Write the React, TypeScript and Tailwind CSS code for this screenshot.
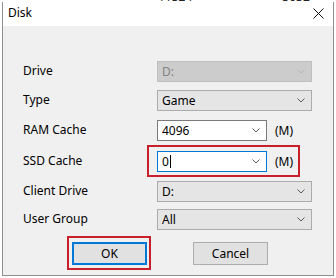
import React from "react";

type BoxKind = "disabled" | "list" | "edit" | "focus";

const BOX_STYLE: Record<BoxKind, string> = {
  disabled: "bg-[#cccccc] border-[#bfbfbf] text-[#838383]",
  list: "bg-[#e5e5e5] border-[#acacac] text-black",
  edit: "bg-white border-[#7a7a7a] text-black",
  focus: "bg-white border-[#0078d7] text-black",
};

function Chevron({ muted }: { muted?: boolean }) {
  return (
    <svg width="8" height="5" viewBox="0 0 8 5" className="shrink-0">
      <polyline
        points="0.5,0.5 4,4 7.5,0.5"
        fill="none"
        stroke={muted ? "#b4b4b4" : "#5a5a5a"}
        strokeWidth="1"
      />
    </svg>
  );
}

function Combo({ value, kind, short }: { value: string; kind: BoxKind; short?: boolean }) {
  return (
    <div
      className={`h-[21px] border flex items-center justify-between pl-[4px] pr-[6px] ${
        short ? "w-[110px]" : "w-[155px]"
      } ${BOX_STYLE[kind]}`}
    >
      <span className="flex items-center">
        {value}
        {kind === "focus" && <span className="ml-[1px] w-px h-[13px] bg-black" />}
      </span>
      <Chevron muted={kind === "disabled"} />
    </div>
  );
}

function Row({ label, top, children }: { label: string; top: string; children: React.ReactNode }) {
  return (
    <div className={`flex items-center ${top}`}>
      <span className="w-[134px] -mt-[2px]">{label}</span>
      {children}
    </div>
  );
}

export default function App() {
  return (
    <div
      className="w-[336px] h-[278px] bg-white overflow-hidden text-[12px] leading-none text-black"
      style={{ fontFamily: '"Noto Sans", "Open Sans", sans-serif' }}
    >
      {/* bits of the list behind the dialog */}
      <div className="h-[2px] overflow-hidden flex text-[#222]">
        <span className="ml-[158px] -mt-[9px]">11324</span>
        <span className="ml-[90px] -mt-[9px]">3032</span>
      </div>

      <div className="ml-[2px] w-[332px] h-[274px] border-x border-b border-[#8f8f8f] flex flex-col">
        {/* title bar */}
        <div className="h-[24px] bg-white flex items-center justify-between pl-[5px] pr-[9px] shrink-0">
          <span className="-mt-[2px]">Disk</span>
          <svg width="11" height="11" viewBox="0 0 11 11" className="-mt-[1px]">
            <path d="M0.5 0.5 L10.5 10.5 M10.5 0.5 L0.5 10.5" stroke="#111" strokeWidth="1" />
          </svg>
        </div>

        {/* body */}
        <div className="flex-1 bg-[#f0f0f0] relative pl-[20px] pt-[35px] flex flex-col">
          <Row label="Drive" top="">
            <Combo value="D:" kind="disabled" />
          </Row>
          <Row label="Type" top="mt-[8px]">
            <Combo value="Game" kind="list" />
          </Row>
          <Row label="RAM Cache" top="mt-[9px]">
            <Combo value="4096" kind="edit" short />
            <span className="ml-[8px]">(M)</span>
          </Row>
          <Row label="SSD Cache" top="mt-[10px]">
            <Combo value="0" kind="focus" short />
            <span className="ml-[8px]">(M)</span>
          </Row>
          <Row label="Client Drive" top="mt-[9px]">
            <Combo value="D:" kind="list" />
          </Row>
          <Row label="User Group" top="mt-[7px]">
            <Combo value="All" kind="list" />
          </Row>

          <div className="flex mt-[12px] ml-[49px]">
            <button className="w-[75px] h-[23px] bg-[#e1e1e1] border-2 border-[#0078d7] flex items-center justify-center">
              OK
            </button>
            <button className="ml-[46px] w-[75px] h-[23px] bg-[#e1e1e1] border border-[#adadad] flex items-center justify-center">
              Cancel
            </button>
          </div>

          {/* red annotation boxes */}
          <div className="absolute left-[144px] top-[119px] w-[153px] h-[32px] border-2 border-[#c8202b]" />
          <div className="absolute left-[64px] top-[210px] w-[84px] h-[34px] border-2 border-[#c8202b]" />
        </div>
      </div>
    </div>
  );
}
